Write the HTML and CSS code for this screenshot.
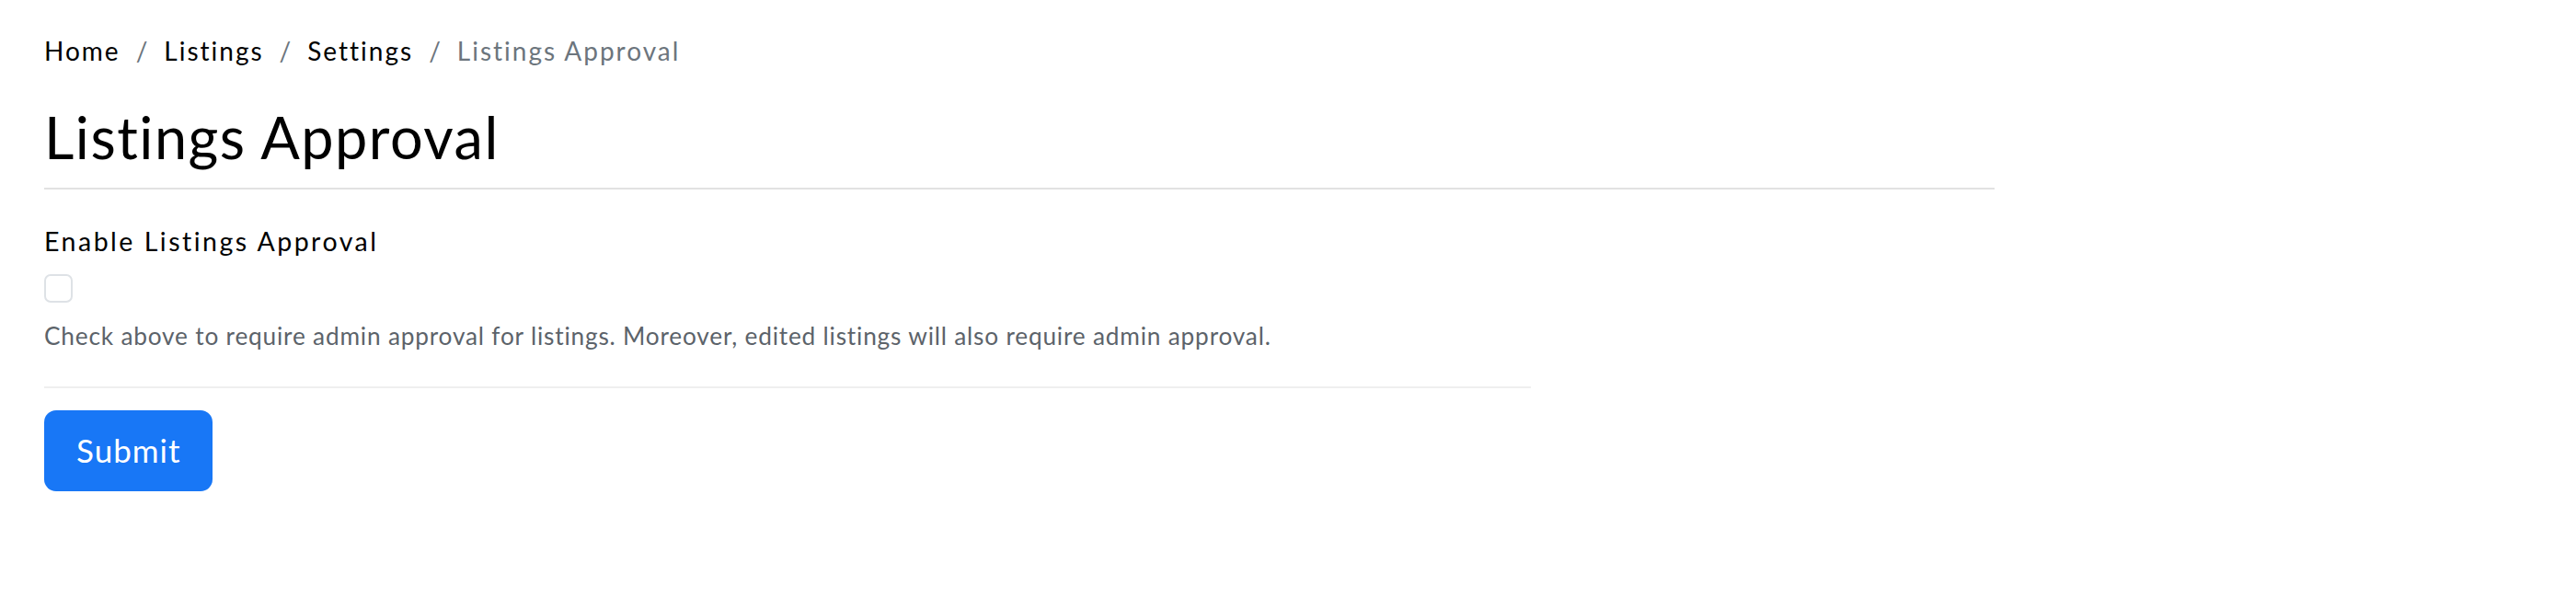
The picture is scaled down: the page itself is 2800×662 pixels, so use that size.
FILE: index.html
```html
<!DOCTYPE html>
<html lang="en">
<head>
<meta charset="utf-8">
<title>Listings Approval</title>
<link rel="stylesheet" href="styles.css">
</head>
<body>
<main class="page">
  <nav class="breadcrumb" aria-label="breadcrumb">
    <a class="crumb" href="#">Home</a>
    <span class="sep">/</span>
    <a class="crumb" href="#">Listings</a>
    <span class="sep">/</span>
    <a class="crumb" href="#">Settings</a>
    <span class="sep">/</span>
    <span class="crumb active">Listings Approval</span>
  </nav>
  <h1 class="title">Listings Approval</h1>
  <form class="settings-form">
    <div class="field">
      <label class="field-label" for="enable">Enable Listings Approval</label>
      <input class="check" type="checkbox" id="enable">
      <div class="help">Check above to require admin approval for listings. Moreover, edited listings will also require admin approval.</div>
    </div>
    <button type="button" class="btn-submit">Submit</button>
  </form>
</main>
</body>
</html>
```
FILE: styles.css
```css
html, body {
  margin: 0;
  padding: 0;
  background: #ffffff;
}
body {
  font-family: Lato, "Open Sans", sans-serif;
  color: #000000;
}
.page {
  padding: 34px 48px 0 48px;
}
.breadcrumb {
  display: flex;
  align-items: center;
  font-size: 28px;
  line-height: 42px;
  height: 42px;
  letter-spacing: 2px;
}
.crumb {
  color: #000000;
  text-decoration: none;
}
.crumb.active {
  color: #6c757d;
}
.sep {
  color: #6c757d;
  padding: 0 16px 0 17px;
}
.title {
  width: 2120px;
  margin: 35px 0 0 0;
  padding-bottom: 17px;
  font-size: 63px;
  font-weight: 400;
  line-height: 1.2;
  letter-spacing: 1.5px;
  border-bottom: 2px solid #e2e2e2;
}
.settings-form {
  display: flex;
  flex-direction: column;
  align-items: flex-start;
}
.field {
  width: 1616px;
  padding-top: 33px;
  padding-bottom: 35px;
  border-bottom: 2px solid #efefef;
  display: flex;
  flex-direction: column;
  align-items: flex-start;
}
.field-label {
  font-size: 28.5px;
  line-height: 47px;
  letter-spacing: 2.5px;
}
.check {
  appearance: none;
  -webkit-appearance: none;
  width: 31px;
  height: 31px;
  margin: 12px 0 0 0;
  border: 2px solid #dee2e6;
  border-radius: 7px;
  background: #ffffff;
}
.help {
  margin-top: 17px;
  font-size: 26.25px;
  line-height: 1.5;
  letter-spacing: 0.8px;
  color: #5c636a;
}
.btn-submit {
  margin-top: 24px;
  font-family: inherit;
  font-size: 35px;
  line-height: 54px;
  letter-spacing: 1px;
  padding: 16px 34px 18px 35px;
  border: 0;
  border-radius: 13px;
  background: #1877f6;
  color: #ffffff;
}
```
